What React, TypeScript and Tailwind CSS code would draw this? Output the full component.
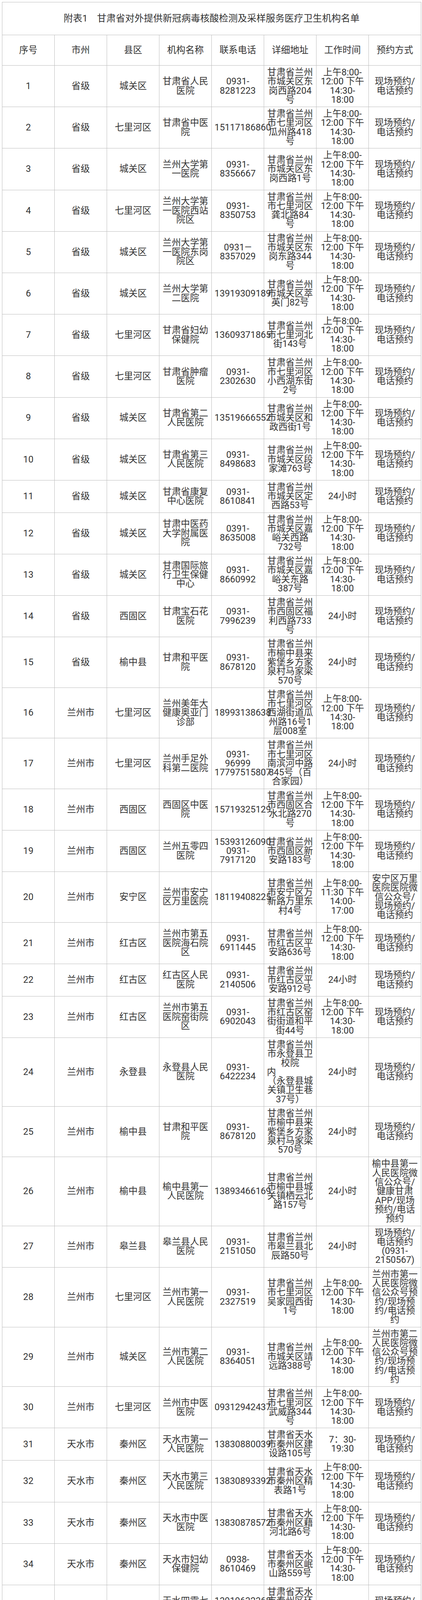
import { Fragment, type ReactNode } from "react";

const T1 = "上午8:00-12:00 下午14:30-18:00";
const A = "现场预约/电话预约";
const H24 = "24小时";

type Row = [number, string, string, string, string, ReactNode, string, string];

const rows: Row[] = [
  [1, "省级", "城关区", "甘肃省人民医院", "0931-8281223", "甘肃省兰州市城关区东岗西路204号", T1, A],
  [2, "省级", "七里河区", "甘肃省中医院", "15117186860", "甘肃省兰州市七里河区瓜州路418号", T1, A],
  [3, "省级", "城关区", "兰州大学第一医院", "0931-8356667", "甘肃省兰州市城关区东岗西路1号", T1, A],
  [4, "省级", "七里河区", "兰州大学第一医院西站院区", "0931-8350753", "甘肃省兰州市七里河区龚北路84号", T1, A],
  [5, "省级", "城关区", "兰州大学第一医院东岗院区", "0931—8357029", "甘肃省兰州市城关区东岗东路344号", T1, A],
  [6, "省级", "城关区", "兰州大学第二医院", "13919309189", "甘肃省兰州市城关区萃英门82号", T1, A],
  [7, "省级", "七里河区", "甘肃省妇幼保健院", "13609371865", "甘肃省兰州市七里河北街143号", T1, A],
  [8, "省级", "七里河区", "甘肃省肿瘤医院", "0931-2302630", "甘肃省兰州市七里河区小西湖东街2号", T1, A],
  [9, "省级", "城关区", "甘肃省第二人民医院", "13519666552", "甘肃省兰州市城关区和政西街1号", T1, A],
  [10, "省级", "城关区", "甘肃省第三人民医院", "0931-8498683", "甘肃省兰州市城关区段家滩763号", T1, A],
  [11, "省级", "城关区", "甘肃省康复中心医院", "0931-8610841", "甘肃省兰州市城关区定西路53号", H24, A],
  [12, "省级", "城关区", "甘肃中医药大学附属医院", "0391-8635008", "甘肃省兰州市城关区嘉峪关西路732号", T1, A],
  [13, "省级", "城关区", "甘肃国际旅行卫生保健中心", "0931-8660992", "甘肃省兰州市城关区嘉峪关东路387号", T1, A],
  [14, "省级", "西固区", "甘肃宝石花医院", "0931-7996239", "甘肃省兰州市西固区福利西路733号", H24, A],
  [15, "省级", "榆中县", "甘肃和平医院", "0931-8678120", "甘肃省兰州市榆中县来紫堡乡方家泉村马家梁570号", H24, A],
  [16, "兰州市", "七里河区", "兰州美年大健康奥亚门诊部", "18993138638", "甘肃省兰州市七里河区西湖街道瓜州路16号1层008室", T1, A],
  [17, "兰州市", "七里河区", "兰州手足外科第二医院", "0931-96999 17797515807", "甘肃省兰州市七里河区南滨河中路845号（百合家园）", H24, A],
  [18, "兰州市", "西固区", "西固区中医院", "15719325129", "甘肃省兰州市西固区合水北路270号", T1, A],
  [19, "兰州市", "西固区", "兰州五零四医院", "15393126090 0931-7917120", "甘肃省兰州市西固区新安路183号", T1, A],
  [20, "兰州市", "安宁区", "兰州市安宁区万里医院", "18119408225", "甘肃省兰州市安宁区万新路万里东村4号", "上午8:00-11:30 下午14:00-17:00", "安宁区万里医院医院微信公众号/现场预约/电话预约"],
  [21, "兰州市", "红古区", "兰州市第五医院海石院区", "0931-6911445", "甘肃省兰州市红古区平安路636号", T1, A],
  [22, "兰州市", "红古区", "红古区人民医院", "0931-2140506", "甘肃省兰州市红古区平安路912号", H24, A],
  [23, "兰州市", "红古区", "兰州市第五医院窑街院区", "0931-6902043", "甘肃省兰州市红古区窑街街道和平街44号", T1, A],
  [
    24,
    "兰州市",
    "永登县",
    "永登县人民医院",
    "0931-6422234",
    <>
      甘肃省兰州市永登县卫校院
      <br />
      <span className="block text-left">内</span>
      （永登县城关镇卫生巷37号）
    </>,
    H24,
    A,
  ],
  [25, "兰州市", "榆中县", "甘肃和平医院", "0931-8678120", "甘肃省兰州市榆中县来紫堡乡方家泉村马家梁570号", H24, A],
  [26, "兰州市", "榆中县", "榆中县第一人民医院", "13893466169", "甘肃省兰州市榆中县城关镇栖云北路157号", H24, "榆中县第一人民医院微信公众号/健康甘肃APP/现场预约/电话预约"],
  [27, "兰州市", "皋兰县", "皋兰县人民医院", "0931-2151050", "甘肃省兰州市皋兰县北辰路50号", H24, "现场预约/电话预约(0931-2150567)"],
  [28, "兰州市", "七里河区", "兰州市第一人民医院", "0931-2327519", "甘肃省兰州市七里河区吴家园西街1号", T1, "兰州市第一人民医院微信公众号预约/现场预约/电话预约"],
  [29, "兰州市", "城关区", "兰州市第二人民医院", "0931-8364051", "甘肃省兰州市城关区靖远路388号", T1, "兰州市第二人民医院微信公众号预约/现场预约/电话预约"],
  [30, "兰州市", "七里河区", "兰州市中医医院", "09312942437", "甘肃省兰州市七里河区武威路344号", T1, A],
  [31, "天水市", "秦州区", "天水市第一人民医院", "13830880039", "甘肃省天水市秦州区建设路105号", "7：30-19:30", A],
  [32, "天水市", "秦州区", "天水市第三人民医院", "13830893392", "甘肃省天水市秦州区精表路1号", T1, A],
  [33, "天水市", "秦州区", "天水市中医医院", "13830878572", "甘肃省天水市秦州区藉河北路6号", T1, A],
  [34, "天水市", "秦州区", "天水市妇幼保健院", "0938-8610469", "甘肃省天水市秦州区岷山路559号", T1, A],
  [35, "天水市", "秦州区", "天水四零七医院", "13919632368 15378826093", "甘肃省天水市秦州区环城西路11号", H24, A],
  [36, "天水市", "秦州区", "秦州区人民医院", "15193848912", "甘肃省天水市秦州区赤峪路6号", H24, A],
  [37, "天水市", "麦积区", "天水市中西医结合医院", "13919654815", "甘肃省天水市麦积区渭滨北路西26号", H24, A],
  [38, "天水市", "麦积区", "天水市第四人民医院", "0938-2691057 0938-2691035", "甘肃省天水市麦积区区府路34号", T1, "天水市第四人民医院公众号预约/健康甘肃app预约/现场预约/电话预约"],
  [39, "天水市", "麦积区", "天水市第五人民医院", "0931-2785209", "甘肃省天水市麦积区社棠东路39号", T1, A],
  [40, "天水市", "甘谷县", "甘谷县人民医院", "18919232688 13919623739", "甘肃省天水市甘谷县大像山镇北关东巷63号", H24, "甘谷县人民医院公众号预约/现场预约/电话预约"],
  [41, "天水市", "武山县", "武山县人民医院", "0938-3422120", "甘肃省天水市武山县城关镇东顺路120号", T1, A],
];

const headers = ["序号", "市州", "县区", "机构名称", "联系电话", "详细地址", "工作时间", "预约方式"];

// let the browser wrap after a hyphen, as the reference does
function brk(v: ReactNode): ReactNode {
  if (typeof v !== "string") return v;
  const parts = v.split("-");
  return parts.map((p, i) => (
    <Fragment key={i}>
      {p}
      {i < parts.length - 1 && (
        <>
          -<wbr />
        </>
      )}
    </Fragment>
  ));
}

const cell = "border border-[#bdbdbd] px-[7px] py-[6px] text-center align-middle";

export default function App() {
  return (
    <div className="min-h-screen bg-white pl-[5px] pt-[5px] font-[Roboto,'Noto_Sans_CJK_SC',sans-serif] text-[#333]">
      <table className="w-[1073px] table-fixed border-collapse text-[23.4px] leading-[23.3px]">
        <colgroup>
          {headers.map((h) => (
            <col key={h} className="w-[134px]" />
          ))}
        </colgroup>
        <tbody>
          <tr>
            <td colSpan={8} className="h-[84px] border border-[#bdbdbd] p-0 text-center align-middle text-[24px]">
              附表1　甘肃省对外提供新冠病毒核酸检测及采样服务医疗卫生机构名单
            </td>
          </tr>
          <tr>
            {headers.map((h) => (
              <td key={h} className="h-[78px] border border-[#bdbdbd] p-0 text-center align-middle">
                {h}
              </td>
            ))}
          </tr>
          {rows.map((r) => (
            <tr key={r[0]}>
              {r.map((c, i) => (
                <td key={i} className={cell}>
                  {brk(typeof c === "number" ? String(c) : c)}
                </td>
              ))}
            </tr>
          ))}
        </tbody>
      </table>
    </div>
  );
}
